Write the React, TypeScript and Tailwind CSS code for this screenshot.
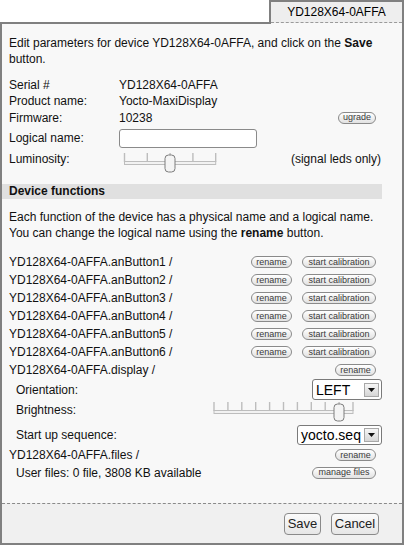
import React from 'react';

const FN = 'YD128X64-0AFFA';

function Pill({ label, w }: { label: string; w: string }) {
  return (
    <span className={`inline-flex h-[12px] items-center justify-center rounded-full border border-[#8a8a8a] bg-linear-to-b from-white to-[#e2e2e2] text-[9px] leading-none text-[#3a3a3a] ${w}`}>
      {label}
    </span>
  );
}

function Select({ value, w, h }: { value: string; w: string; h: string }) {
  return (
    <div className={`flex items-center overflow-hidden rounded-[3px] border border-[#7a7a7a] bg-white pl-[3px] ${w} ${h}`}>
      <span className="whitespace-nowrap text-[14px] leading-none text-black">{value}</span>
      <span className="ml-auto mr-[2px] flex h-[14px] w-[15px] shrink-0 items-center justify-center border border-[#a8a8a8] bg-linear-to-b from-[#f6f6f6] to-[#d6d6d6]">
        <svg width="7" height="4" viewBox="0 0 7 4">
          <path d="M0 0h7L3.5 4z" fill="#111" />
        </svg>
      </span>
    </div>
  );
}

function Slider({ width, ticks, start, step, thumb, className }: { width: number; ticks: number; start: number; step: number; thumb: number; className?: string }) {
  const xs = Array.from({ length: ticks }, (_, i) => start + i * step);
  const end = xs[xs.length - 1];
  return (
    <svg width={width} height="22" viewBox={`0 0 ${width} 22`} className={className}>
      {xs.map((x) => (
        <line key={x} x1={x} y1="1" x2={x} y2="10" stroke="#bdbdbd" strokeWidth="1.4" />
      ))}
      <rect x={start} y="9.5" width={end - start} height="3" fill="#f2f2f2" stroke="#bdbdbd" strokeWidth="1" />
      <rect x={thumb - 5} y="3" width="10" height="17" rx="3.5" fill="#f4f4f4" stroke="#7d7d7d" strokeWidth="1" />
    </svg>
  );
}

function FuncRow({ name }: { name: string }) {
  return (
    <div className="flex h-[18px] items-center justify-between">
      <span>{FN}.{name} /</span>
      <div className="mr-[6px] flex gap-[10px]">
        <Pill label="rename" w="w-[41px]" />
        <Pill label="start calibration" w="w-[74px]" />
      </div>
    </div>
  );
}

export default function App() {
  return (
    <div className="flex h-[545px] w-[404px] flex-col bg-white font-['Liberation_Sans',Arial,sans-serif] text-[12px] text-[#111]">
      <div className="flex h-[24px]">
        <div className="flex-1 border-b-2 border-[#808080]" />
        <div className="w-[135px] border-x-2 border-t-2 border-[#808080] bg-[#f8f8f8]">
          <div className="flex h-[21px] items-center justify-center border-b border-dashed border-[#9a9a9a] bg-[#eeeeee] text-black">
            {FN}
          </div>
        </div>
      </div>

      <div className="flex flex-1 flex-col border-x-2 border-b-2 border-[#808080] bg-[#f8f8f8]">
        <div className="flex flex-1 flex-col pl-[7px] pr-[20px] pt-[11px] leading-[16px]">
          <p>
            Edit parameters for device {FN}, and click on the <b>Save</b> button.
          </p>

          <div className="mt-[10px] flex h-[16px] items-center">
            <span className="w-[110px]">Serial #</span>
            <span>{FN}</span>
          </div>
          <div className="flex h-[16px] items-center">
            <span className="w-[110px]">Product name:</span>
            <span>Yocto-MaxiDisplay</span>
          </div>
          <div className="flex h-[17px] items-center">
            <span className="w-[110px]">Firmware:</span>
            <span>10238</span>
            <span className="ml-auto mr-[6px] flex">
              <Pill label="ugrade" w="w-[38px]" />
            </span>
          </div>
          <div className="flex h-[24px] items-center">
            <span className="w-[110px]">Logical name:</span>
            <div className="h-[19px] w-[138px] rounded-[3px] border border-[#8a8a8a] bg-white" />
          </div>
          <div className="flex h-[24px] items-start">
            <span className="mt-[1px] w-[110px]">Luminosity:</span>
            <Slider width={100} ticks={5} start={5.5} step={22.8} thumb={51} className="mt-[2px]" />
            <span className="ml-auto mt-[1px] mr-[1px]">(signal leds only)</span>
          </div>

          <div className="-ml-[7px] mt-[10px] h-[15px] bg-[#e0e0e0] pl-[7px] font-bold leading-[15px]">
            Device functions
          </div>

          <p className="mt-[10px]">
            Each function of the device has a physical name and a logical name. You can change the logical name using the <b>rename</b> button.
          </p>

          <div className="mt-[12px] flex flex-col">
            {[1, 2, 3, 4, 5, 6].map((n) => (
              <FuncRow key={n} name={`anButton${n}`} />
            ))}
            <div className="flex h-[18px] items-center justify-between">
              <span>{FN}.display /</span>
              <span className="mr-[6px] flex">
                <Pill label="rename" w="w-[41px]" />
              </span>
            </div>
            <div className="flex h-[22px] items-start justify-between pl-[7px]">
              <span className="mt-[3px]">Orientation:</span>
              <Select value="LEFT" w="w-[70px]" h="h-[21px]" />
            </div>
            <div className="flex h-[22px] items-start justify-between pl-[7px]">
              <span className="mt-[1px]">Brightness:</span>
              <Slider width={146} ticks={11} start={4} step={13.9} thumb={129} className="mr-[26px]" />
            </div>
            <div className="flex h-[23px] items-center justify-between pl-[7px]">
              <span>Start up sequence:</span>
              <Select value="yocto.seq" w="w-[85px]" h="h-[20px]" />
            </div>
            <div className="flex h-[18px] items-center justify-between">
              <span>{FN}.files /</span>
              <span className="mr-[6px] flex">
                <Pill label="rename" w="w-[41px]" />
              </span>
            </div>
            <div className="flex h-[17px] items-center justify-between pl-[7px]">
              <span>User files: 0 file, 3808 KB available</span>
              <span className="mr-[6px] flex">
                <Pill label="manage files" w="w-[64px]" />
              </span>
            </div>
          </div>
        </div>

        <div className="flex h-[40px] items-start justify-end gap-[10px] border-t border-dashed border-[#8a8a8a] bg-[#f0f0f0] pr-[23px] pt-[9px]">
          <button className="flex h-[22px] w-[37px] items-center justify-center rounded-[4px] border border-[#8a8a8a] bg-linear-to-b from-[#fbfbfb] to-[#e6e6e6] text-[13px] text-[#222]">
            Save
          </button>
          <button className="flex h-[22px] w-[48px] items-center justify-center rounded-[4px] border border-[#8a8a8a] bg-linear-to-b from-[#fbfbfb] to-[#e6e6e6] text-[13px] text-[#222]">
            Cancel
          </button>
        </div>
      </div>
    </div>
  );
}
